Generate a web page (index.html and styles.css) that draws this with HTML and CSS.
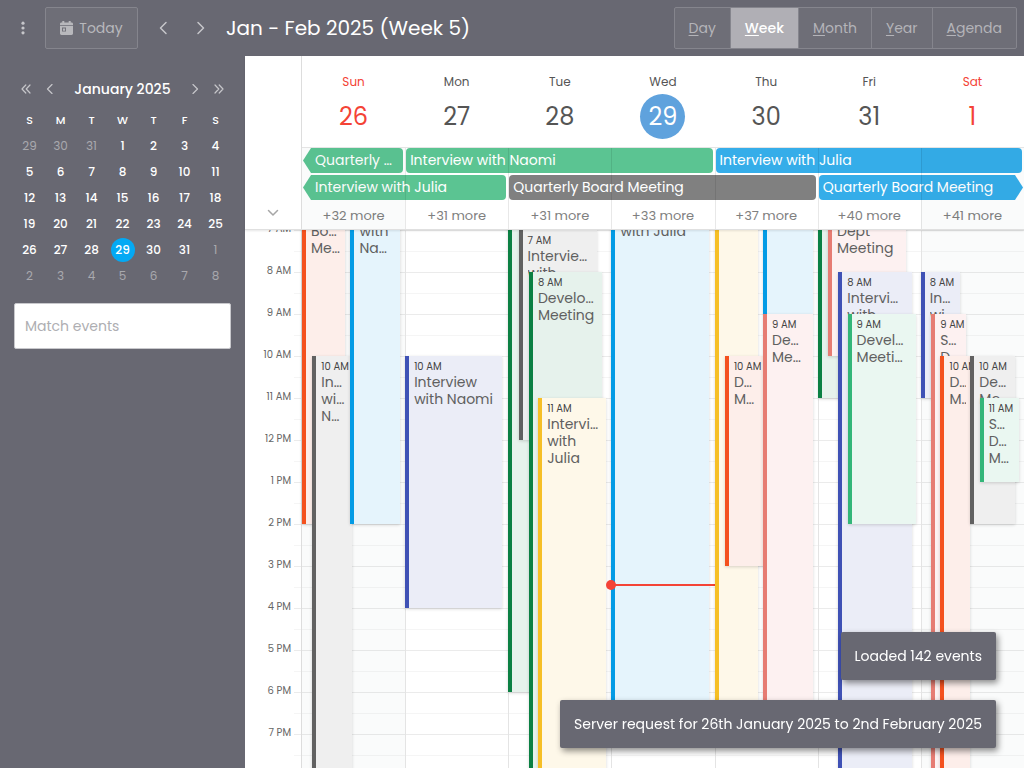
FILE: index.html
```html
<!DOCTYPE html>
<html lang="en">
<head>
<meta charset="utf-8">
<meta name="viewport" content="width=device-width, initial-scale=1">
<title>Calendar</title>
<link rel="stylesheet" href="styles.css">
</head>
<body>
<div class="app">
  <header class="toolbar">
    <button class="icon-btn menu" aria-label="Menu"><svg width="6" height="14" viewBox="0 0 6 14" fill="currentColor"><circle cx="3" cy="2.2" r="1.6"/><circle cx="3" cy="7" r="1.6"/><circle cx="3" cy="11.8" r="1.6"/></svg></button>
    <button class="today"><svg width="13" height="14" viewBox="0 0 13 14" fill="currentColor"><path fill-rule="evenodd" d="M2.300 0h2v1.600h4.400V0h2v1.600h.8c.9 0 1.500.6 1.500 1.400v.9H0V3c0-.8.6-1.400 1.500-1.400h.8zM0 4.800h13v7.800c0 .8-.6 1.400-1.500 1.400h-10C.6 14 0 13.400 0 12.600zM2 6.600v4h4v-4zM2.900 7.500h2.200v2.200H2.900z"/></svg>Today</button>
    <button class="icon-btn step" aria-label="Previous week"><svg width="10" height="14" viewBox="0 0 10 14"><path d="M8 1.500 2.500 7 8 12.500"/></svg></button>
    <button class="icon-btn step" aria-label="Next week"><svg width="10" height="14" viewBox="0 0 10 14"><path d="M2 1.500 7.500 7 2 12.500"/></svg></button>
    <h1 class="range">Jan - Feb 2025 (Week 5)</h1>
    <div class="views">
      <button><u>D</u>ay</button><button class="active"><u>W</u>eek</button><button><u>M</u>onth</button><button><u>Y</u>ear</button><button><u>A</u>genda</button>
    </div>
  </header>

  <div class="body">
    <aside class="sidebar">
      <div class="mini-head">
        <button class="icon-btn" aria-label="Previous year"><svg width="10" height="10" viewBox="0 0 10 10"><path d="M4.800 1 1 5l3.800 4M9 1 5.200 5 9 9"/></svg></button>
        <button class="icon-btn" aria-label="Previous month"><svg width="10" height="10" viewBox="0 0 10 10"><path d="M7 .5 2.500 5 7 9.500"/></svg></button>
        <h2>January 2025</h2>
        <button class="icon-btn" aria-label="Next month"><svg width="10" height="10" viewBox="0 0 10 10"><path d="M3 .5 7.500 5 3 9.500"/></svg></button>
        <button class="icon-btn" aria-label="Next year"><svg width="10" height="10" viewBox="0 0 10 10"><path d="M1 1l3.800 4L1 9M5.200 1 9 5 5.200 9"/></svg></button>
      </div>
      <table class="mini">
        <thead><tr><th>S</th><th>M</th><th>T</th><th>W</th><th>T</th><th>F</th><th>S</th></tr></thead>
        <tbody>
          <tr><td class="other">29</td><td class="other">30</td><td class="other">31</td><td>1</td><td>2</td><td>3</td><td>4</td></tr>
          <tr><td>5</td><td>6</td><td>7</td><td>8</td><td>9</td><td>10</td><td>11</td></tr>
          <tr><td>12</td><td>13</td><td>14</td><td>15</td><td>16</td><td>17</td><td>18</td></tr>
          <tr><td>19</td><td>20</td><td>21</td><td>22</td><td>23</td><td>24</td><td>25</td></tr>
          <tr><td>26</td><td>27</td><td>28</td><td><span class="mini-today">29</span></td><td>30</td><td>31</td><td class="other">1</td></tr>
          <tr><td class="other">2</td><td class="other">3</td><td class="other">4</td><td class="other">5</td><td class="other">6</td><td class="other">7</td><td class="other">8</td></tr>
        </tbody>
      </table>
      <input class="filter" type="text" placeholder="Match events" aria-label="Match events">
    </aside>

    <main class="calendar">
      <div class="cal-head">
        <div class="corner"><button class="icon-btn" aria-label="Expand all day events"><svg width="12" height="8" viewBox="0 0 12 8"><path d="M1.500 1.500 6 6l4.500-4.500"/></svg></button></div>
        <div class="head-main">
          <div class="day-names">
            <div class="day-name weekend">Sun<span class="num">26</span></div>
            <div class="day-name">Mon<span class="num">27</span></div>
            <div class="day-name">Tue<span class="num">28</span></div>
            <div class="day-name now">Wed<span class="num">29</span></div>
            <div class="day-name">Thu<span class="num">30</span></div>
            <div class="day-name">Fri<span class="num">31</span></div>
            <div class="day-name weekend">Sat<span class="num">1</span></div>
          </div>
          <div class="all-day">
            <div class="bar green from-prev c1 r1">Quarterly …</div>
            <div class="bar green c2-4 r1">Interview with Naomi</div>
            <div class="bar blue c5-7 r1">Interview with Julia</div>
            <div class="bar green from-prev c1-2 r2">Interview with Julia</div>
            <div class="bar gray c3-5 r2">Quarterly Board Meeting</div>
            <div class="bar blue to-next c6-7 r2">Quarterly Board Meeting</div>
            <button class="more">+32 more</button><button class="more">+31 more</button><button class="more">+31 more</button><button class="more">+33 more</button><button class="more">+37 more</button><button class="more">+40 more</button><button class="more">+41 more</button>
            <div class="rules"><i class="weekend"></i><i></i><i></i><i></i><i></i><i></i><i class="weekend"></i></div>
          </div>
        </div>
      </div>

      <div class="scroller">
        <div class="grid">
          <div class="hours"><span>7 AM</span><span>8 AM</span><span>9 AM</span><span>10 AM</span><span>11 AM</span><span>12 PM</span><span>1 PM</span><span>2 PM</span><span>3 PM</span><span>4 PM</span><span>5 PM</span><span>6 PM</span><span>7 PM</span></div>
          <div class="day weekend">
            <div class="event orange earlier" style="--s:6;--e:14;--x:0;--w:42"><p>Bo…<br>Me…</p></div>
            <div class="event gray" style="--s:10;--e:21;--x:10;--w:38"><time>10 AM</time><p>In…<br>wi…<br>N…</p></div>
            <div class="event sky earlier" style="--s:6;--e:14;--x:47;--w:48"><p>with<br>Na…</p></div>
          </div>
          <div class="day">
            <div class="event indigo" style="--s:10;--e:16;--x:0;--w:94"><time>10 AM</time><p>Interview<br>with Naomi</p></div>
          </div>
          <div class="day">
            <div class="event forest" style="--s:3;--e:18;--x:0;--w:80"></div>
            <div class="event gray" style="--s:7;--e:12;--x:10;--w:76"><time>7 AM</time><p>Intervie…<br>with</p></div>
            <div class="event forest" style="--s:8;--e:21;--x:20;--w:71"><time>8 AM</time><p>Develo…<br>Meeting</p></div>
            <div class="event yellow" style="--s:11;--e:21;--x:29;--w:66"><time>11 AM</time><p>Intervi…<br>with<br>Julia</p></div>
          </div>
          <div class="day">
            <div class="event sky earlier" style="--s:6;--e:19;--x:0;--w:95"><p>with Julia</p></div>
            <div class="now-line" style="--s:15.43"></div>
          </div>
          <div class="day">
            <div class="event yellow" style="--s:4;--e:19;--x:0;--w:42"></div>
            <div class="event orange" style="--s:10;--e:15;--x:10;--w:38"><time>10 AM</time><p>D…<br>M…</p></div>
            <div class="event sky" style="--s:4;--e:9;--x:47;--w:48"></div>
            <div class="event salmon" style="--s:9;--e:19;--x:47;--w:48"><time>9 AM</time><p>De…<br>Me…</p></div>
          </div>
          <div class="day">
            <div class="event forest" style="--s:4;--e:11;--x:0;--w:80"></div>
            <div class="event salmon earlier" style="--s:6;--e:10;--x:10;--w:76"><p>Dept<br>Meeting</p></div>
            <div class="event indigo" style="--s:8;--e:21;--x:20;--w:71"><time>8 AM</time><p>Intervi…<br>with</p></div>
            <div class="event mint" style="--s:9;--e:14;--x:29;--w:66"><time>9 AM</time><p>Devel…<br>Meeti…</p></div>
          </div>
          <div class="day weekend">
            <div class="event indigo" style="--s:8;--e:11;--x:0;--w:38"><time>8 AM</time><p>In…<br>wi…</p></div>
            <div class="event salmon" style="--s:9;--e:21;--x:10;--w:34"><time>9 AM</time><p>S…<br>D…</p></div>
            <div class="event orange" style="--s:10;--e:21;--x:19;--w:29"><time>10 AM</time><p>D…<br>M…</p></div>
            <div class="event gray" style="--s:10;--e:14;--x:48;--w:43"><time>10 AM</time><p>De…<br>Me…</p></div>
            <div class="event mint" style="--s:11;--e:13;--x:57;--w:38"><time>11 AM</time><p>S…<br>D…<br>M…</p></div>
          </div>
        </div>
      </div>
    </main>
  </div>

  <div class="toasts" role="status">
    <div class="toast">Loaded 142 events</div>
    <div class="toast">Server request for 26th January 2025 to 2nd February 2025</div>
  </div>
</div>
</body>
</html>
```

FILE: styles.css
```css
* { box-sizing: border-box; }
body { margin: 0; font-family: Poppins, Inter, "Open Sans", sans-serif; font-size: 14px; color: #555; }
button, input { font: inherit; color: inherit; margin: 0; }
button { background: none; border: 0; padding: 0; cursor: pointer; }
h1, h2, p { margin: 0; font-weight: 400; }
svg { display: block; }
path { fill: none; stroke: currentColor; stroke-width: 1.5; stroke-linecap: round; stroke-linejoin: round; }
.today path { fill: currentColor; stroke: none; }

.app { height: 100vh; display: flex; flex-direction: column; background: #686872; }

/* Toolbar */
.toolbar { display: flex; align-items: center; flex: none; padding: 7px 7px 7px 14px; color: #fff; }
.icon-btn { display: flex; align-items: center; justify-content: center; color: #c6c6ca; }
.menu { width: 17px; height: 42px; margin-right: 14px; }
.today { display: flex; align-items: center; justify-content: center; gap: 6px; width: 93px; height: 42px; border: 1px solid #85858d; border-radius: 2px; background: #6e6e77; color: #b8b8bc; margin-right: 6px; }
.step { width: 38px; height: 42px; }
.range { margin-left: 6px; font-size: 20px; flex: 1; white-space: nowrap; }
.views { display: flex; border: 1px solid #85858d; border-radius: 2px; background: #6e6e77; }
.views button { height: 40px; padding: 0 14px; color: #b4b4b9; }
.views button + button { border-left: 1px solid #85858d; }
.views .active { background: #b0afb5; color: #fff; font-weight: 500; }
.views u { text-underline-offset: 2px; }

.body { flex: 1; min-height: 0; display: flex; }

/* Sidebar */
.sidebar { flex: none; width: 245px; padding: 19px 14px; color: #fff; }
.mini-head { display: flex; align-items: center; height: 28px; }
.mini-head .icon-btn { width: 24px; height: 28px; }
.mini-head path { stroke-width: 1.2; }
.mini-head h2 { flex: 1; text-align: center; font-size: 14px; font-weight: 500; }
.mini { width: 100%; border-collapse: collapse; table-layout: fixed; margin-top: 4px; font-size: 12px; font-weight: 500; }
.mini th, .mini td { height: 26px; padding: 0; text-align: center; }
.mini th { font-size: 11px; font-weight: 500; }
.mini .other { color: #a9a9ae; font-weight: 400; }
.mini-today { display: block; width: 24px; margin: 0 auto; line-height: 24px; border-radius: 50%; background: #03a9f4; }
.filter { display: block; width: 100%; height: 46px; margin-top: 14px; padding: 0 10px; border: 1px solid #c8c8cc; border-radius: 2px; background: #fff; color: #555; }
.filter::placeholder { color: #aeaeb2; opacity: 1; }

/* Calendar header */
.calendar { flex: 1; min-width: 0; display: flex; flex-direction: column; background: #fff; }
.cal-head { display: flex; flex: none; border-bottom: 1px solid #e0e0e0; box-shadow: 0 1px 2px rgba(0,0,0,.1); z-index: 2; background: #fff; }
.corner { flex: none; width: 57px; display: flex; align-items: flex-end; justify-content: center; border-right: 1px solid #ddd; padding: 0 0 12px; }
.corner .icon-btn { color: #a6a6a6; }
.head-main { flex: 1; min-width: 0; }
.day-names { display: grid; grid-template-columns: repeat(7, 1fr); padding: 17px 0 8px; }
.day-name { text-align: center; font-size: 12px; line-height: 18px; }
.num { display: block; width: 45px; margin: 3px auto 0; font-size: 24px; line-height: 45px; }
.day-name.weekend { color: #f44336; }
.now .num { border-radius: 50%; background: #5fa2dd; color: #fff; }
.all-day { position: relative; display: grid; grid-template-columns: repeat(7, 1fr); grid-template-rows: 25px 25px 27px; row-gap: 2px; border-top: 1px solid #e4e4e4; }
.bar { margin: 0 2px 0 1px; padding: 0 4px; border-radius: 4px; color: #fff; line-height: 25px; white-space: nowrap; overflow: hidden; }
.bar.green { background: #5bc492; }
.bar.blue { background: #35ade9; }
.bar.gray { background: #808080; }
.from-prev { padding-left: 12px; clip-path: polygon(0 50%, 8px 0, 100% 0, 100% 100%, 8px 100%); }
.to-next { margin-right: 1px; clip-path: polygon(0 0, calc(100% - 8px) 0, 100% 50%, calc(100% - 8px) 100%, 0 100%); }
.r1 { grid-row: 1; } .r2 { grid-row: 2; }
.c1 { grid-column: 1; } .c1-2 { grid-column: 1 / 3; } .c2-4 { grid-column: 2 / 5; }
.c3-5 { grid-column: 3 / 6; } .c5-7 { grid-column: 5 / 8; } .c6-7 { grid-column: 6 / 8; }
.more { color: #808080; font-size: 13px; }
.rules { position: absolute; inset: 0; display: grid; grid-template-columns: repeat(7, 1fr); pointer-events: none; }
.rules i + i { box-shadow: inset 1px 0 rgba(0,0,0,.09); }
.rules .weekend { background: rgba(0,50,30,.02); }

/* Time grid */
.scroller { flex: 1; min-height: 0; overflow: hidden auto; scrollbar-width: none; }
.grid { --hour: 42px; display: grid; grid-template-columns: 57px repeat(7, 1fr); height: calc(14 * var(--hour)); overflow: hidden;
  background: repeating-linear-gradient(#ebebeb 0 1px, transparent 1px 21px, #f5f5f5 21px 22px, transparent 22px 42px) 49px 0 no-repeat; }
.hours { border-right: 1px solid #ddd; padding-right: 10px; display: flex; flex-direction: column; font-size: 10px; color: #666; text-align: right; }
.hours span { height: var(--hour); line-height: 18px; margin-top: -10px; margin-bottom: 10px; }
.day { position: relative; }
.day + .day { box-shadow: inset 1px 0 #e4e4e4; }
.day.weekend { background: rgba(0,50,30,.02); }
.event { position: absolute; top: calc((var(--s) - 7) * var(--hour)); height: calc((var(--e) - var(--s)) * var(--hour)); left: calc(var(--x) * 1%); width: calc(var(--w) * 1%);
  padding: 4px 4px 0 5px; border-left: 4px solid; overflow: hidden; box-shadow: 0 1px 3px rgba(0,0,0,.16); white-space: nowrap; }
.event.earlier { padding-top: 35px; }
.event time { display: block; font-size: 10px; line-height: 14px; color: #444; }
.event p { font-size: 14px; line-height: 17px; color: #606060; overflow: hidden; }
.orange { border-color: #f4511e; background: #fdeeea; }
.event.gray { border-color: #616161; background: #efefef; }
.sky { border-color: #039be5; background: #e5f4fc; }
.indigo { border-color: #3f51b5; background: #ebedf7; }
.forest { border-color: #0b8043; background: #e6f2ec; }
.yellow { border-color: #f6bf26; background: #fef8e9; }
.salmon { border-color: #e67c73; background: #fdf1f1; }
.mint { border-color: #33b679; background: #eaf7f1; }
.now-line { position: absolute; left: 0; right: 0; top: calc((var(--s) - 7) * var(--hour)); height: 2px; background: #f44336; }
.now-line::before { content: ""; position: absolute; left: -5px; top: -4px; width: 10px; height: 10px; border-radius: 50%; background: #f44336; }

/* Toasts */
.toasts { position: fixed; right: 28px; bottom: 20px; z-index: 5; display: flex; flex-direction: column; align-items: flex-end; gap: 20px; }
.toast { padding: 14px; line-height: 20px; border-radius: 2px; background: #686872; color: #fff; box-shadow: 2px 3px 6px rgba(0,0,0,.45); }
```
